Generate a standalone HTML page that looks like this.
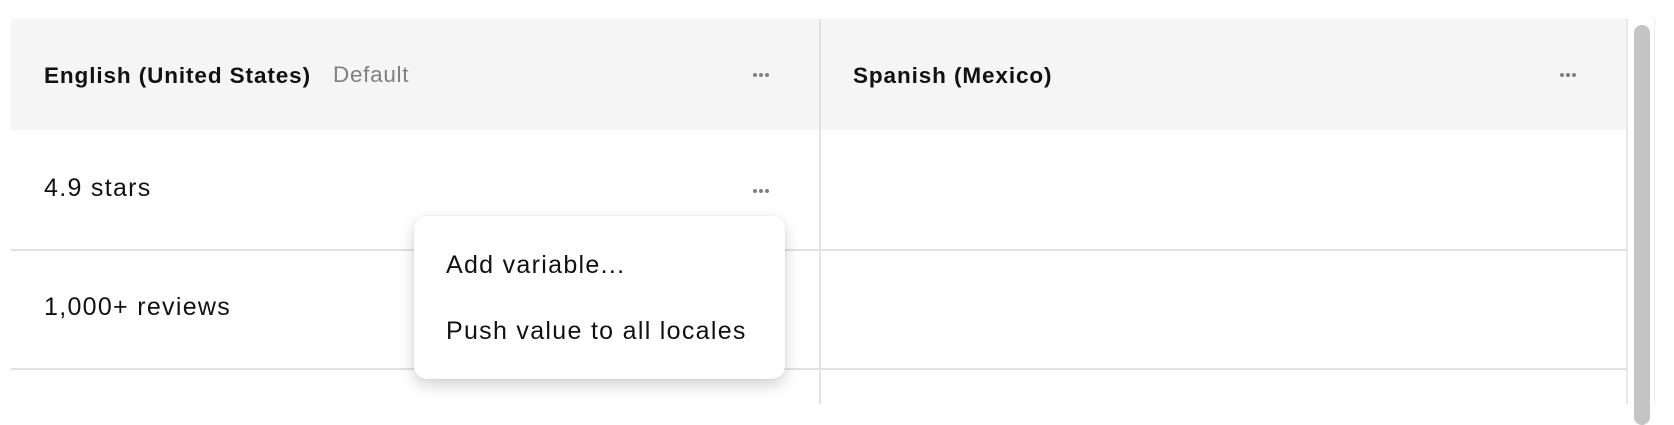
<!DOCTYPE html>
<html><head><style>
body{margin:0;width:1674px;height:404px;background:#fff;position:relative;overflow:hidden;font-family:"Liberation Sans",sans-serif;color:#111;}
.a{position:absolute}
.hdr{left:11px;top:19px;width:1615px;height:111px;background:#f5f5f5}
.hl{height:2px;background:#e2e2e2}
.t{position:absolute;white-space:nowrap;line-height:1}
.dots{position:absolute;width:20px;height:6px}
.dots i{position:absolute;top:0;width:4px;height:4px;border-radius:50%;background:#808080}
.b{font-size:22.5px;font-weight:bold;letter-spacing:0.9px}
.r{font-size:25px;letter-spacing:1.3px}
</style></head><body>
<div class="a hdr"></div>
<div class="a" style="left:819px;top:19px;width:2px;height:385px;background:#e2e2e2"></div>
<div class="a hl" style="left:11px;top:249px;width:1615px"></div>
<div class="a hl" style="left:11px;top:368px;width:1615px"></div>
<div class="a" style="left:1626px;top:19px;width:2px;height:385px;background:#e8e8e8"></div>
<div class="a" style="left:1654px;top:19px;width:1px;height:385px;background:#ececec"></div>
<div class="a" style="left:1634px;top:25px;width:16px;height:400px;border-radius:8px;background:#c4c4c4"></div>

<div class="t b" style="left:44px;top:65px">English (United States)</div>
<div class="t" style="left:333px;top:64px;font-size:22.5px;letter-spacing:0.7px;color:#808080">Default</div>
<div class="t b" style="left:853px;top:65px">Spanish (Mexico)</div>
<div class="dots" style="left:753px;top:73px"><i style="left:0"></i><i style="left:6px"></i><i style="left:12px"></i></div>
<div class="dots" style="left:1560px;top:73px"><i style="left:0"></i><i style="left:6px"></i><i style="left:12px"></i></div>
<div class="dots" style="left:753px;top:189px"><i style="left:0"></i><i style="left:6px"></i><i style="left:12px"></i></div>

<div class="t r" style="left:44px;top:176px">4.9 stars</div>
<div class="t r" style="left:44px;top:295px">1,000+ reviews</div>

<div class="a" style="left:414px;top:216px;width:371px;height:163px;background:#fff;border-radius:13px;box-shadow:0 6px 16px rgba(0,0,0,0.18),0 0 2px rgba(0,0,0,0.08)"></div>
<div class="t r" style="left:446px;top:253px">Add variable...</div>
<div class="t r" style="left:446px;top:319px">Push value to all locales</div>
</body></html>
